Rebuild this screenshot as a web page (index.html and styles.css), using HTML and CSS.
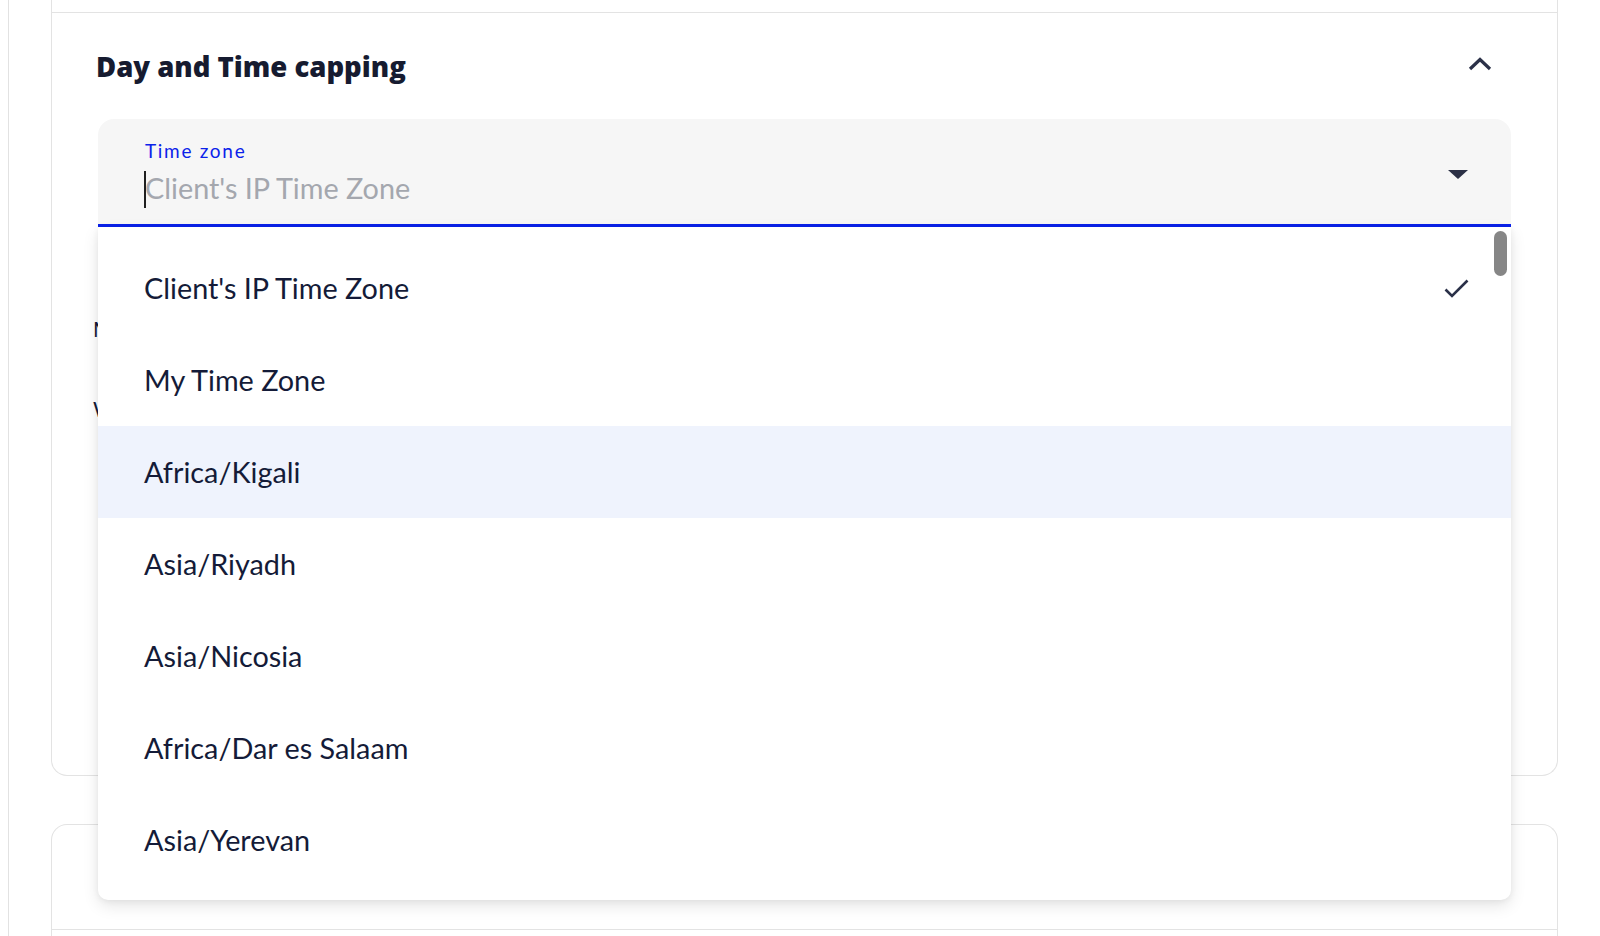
FILE: index.html
```html
<!DOCTYPE html>
<html lang="en">
<head>
<meta charset="utf-8">
<title>Day and Time capping</title>
<link rel="stylesheet" href="styles.css">
</head>
<body>
<div class="page">
  <div class="frame">
    <section class="card card-capping">
      <div class="card-prev"></div>
      <div class="card-body">
        <header class="card-header">
          <h2 class="card-title">Day and Time capping</h2>
          <button class="collapse-btn" type="button" aria-label="Collapse">
            <svg width="24" height="14" viewBox="0 0 24 14"><polyline points="2,12 12,2.5 22,12" fill="none" stroke="#2b3148" stroke-width="3.2"/></svg>
          </button>
        </header>

        <div class="tz-select">
          <div class="field">
            <div class="field-text">
              <label class="field-label">Time zone</label>
              <div class="field-input"><span class="caret"></span><span class="placeholder">Client's IP Time Zone</span></div>
            </div>
            <svg class="field-arrow" width="20" height="9" viewBox="0 0 20 9"><polygon points="0,0 20,0 10,9" fill="#2b3045"/></svg>
          </div>
          <ul class="menu">
            <li class="menu-item selected"><span>Client's IP Time Zone</span>
              <svg class="check" width="25" height="19" viewBox="0 0 25 19"><polyline points="1.5,10.5 8,17 23.5,1.5" fill="none" stroke="#2a3048" stroke-width="2.6"/></svg>
            </li>
            <li class="menu-item"><span>My Time Zone</span></li>
            <li class="menu-item active"><span>Africa/Kigali</span></li>
            <li class="menu-item"><span>Asia/Riyadh</span></li>
            <li class="menu-item"><span>Asia/Nicosia</span></li>
            <li class="menu-item"><span>Africa/Dar es Salaam</span></li>
            <li class="menu-item"><span>Asia/Yerevan</span></li>
            <li class="scroll-thumb" aria-hidden="true"></li>
          </ul>
        </div>

        <div class="schedule">
          <div class="day-row">Monday</div>
          <div class="day-row">Wednesday</div>
        </div>
      </div>
    </section>

    <section class="card card-next">
      <div class="card-next-header"></div>
    </section>
  </div>
</div>
</body>
</html>
```
FILE: styles.css
```css
* { box-sizing: border-box; }

html, body {
  margin: 0;
  height: 100%;
  overflow: hidden;
  background: #ffffff;
}

body {
  font-family: Lato, "Noto Sans", sans-serif;
  color: #141b38;
}

.page {
  height: 936px;
  padding-left: 8px;
}

.frame {
  display: flex;
  flex-direction: column;
  height: 100%;
  border-left: 1px solid #e2e2e2;
  padding: 0 42px;
}

.card {
  border: 1px solid #e3e3e3;
  background: #ffffff;
}

.card-capping {
  flex: none;
  border-top: 0;
  border-radius: 0 0 16px 16px;
}

.card-prev {
  height: 13px;
  border-bottom: 1px solid #e3e3e3;
}

.card-body {
  padding: 34px 46px 0 46px;
}

.card-header {
  display: flex;
  align-items: center;
  justify-content: space-between;
  height: 36px;
  padding-right: 19px;
}

.card-title {
  margin: 3px 0 0 -2px;
  font-family: "Open Sans", Lato, sans-serif;
  font-weight: 800;
  font-size: 27.5px;
  line-height: 36px;
  color: #161b30;
}

.collapse-btn {
  display: flex;
  padding: 0;
  margin: -3px 0 0 0;
  border: 0;
  background: none;
}

.tz-select {
  position: relative;
  margin-top: 36px;
  z-index: 2;
}

.field {
  display: flex;
  align-items: center;
  height: 108px;
  padding: 0 43px 0 47px;
  background: #f6f6f6;
  border-bottom: 3px solid #0b22ea;
  border-radius: 16px 16px 0 0;
}

.field-text {
  flex: 1;
  margin-top: 2px;
}

.field-label {
  display: block;
  font-size: 19px;
  line-height: 24px;
  letter-spacing: 1.7px;
  color: #0b22ea;
}

.field-input {
  position: relative;
  margin-top: 7px;
  font-size: 28.8px;
  line-height: 36px;
}

.caret {
  position: absolute;
  left: -1px;
  top: 1px;
  width: 1.5px;
  height: 37px;
  background: #1f1f1f;
}

.placeholder {
  color: #a4a7ae;
}

.field-arrow {
  margin-top: 6px;
}

.menu {
  position: absolute;
  top: 100%;
  left: 0;
  right: 0;
  margin: 0;
  padding: 15px 0 14px;
  list-style: none;
  background: #ffffff;
  border-radius: 0 0 10px 10px;
  box-shadow: 0 6px 16px rgba(0, 0, 0, 0.10), 0 1px 6px rgba(0, 0, 0, 0.06);
}

.menu-item {
  display: flex;
  align-items: center;
  justify-content: space-between;
  height: 92px;
  padding: 0 42px 0 46px;
  font-size: 28.8px;
  line-height: 36px;
  color: #141b38;
}

.menu-item.active {
  background: #eff3fd;
}

.check {
  margin-top: 1px;
}

.scroll-thumb {
  position: absolute;
  top: 4px;
  right: 4px;
  width: 13px;
  height: 45px;
  border-radius: 7px;
  background: #868686;
}

.schedule {
  margin: 90px 0 0 -5px;
  padding-bottom: 298px;
}

.day-row {
  height: 80px;
  font-size: 21px;
  line-height: 24px;
  color: #141b38;
}

.card-next {
  flex: 1;
  margin-top: 48px;
  border-bottom: 0;
  border-radius: 16px 16px 0 0;
}

.card-next-header {
  height: 105px;
  border-bottom: 1px solid #e3e3e3;
}
```
